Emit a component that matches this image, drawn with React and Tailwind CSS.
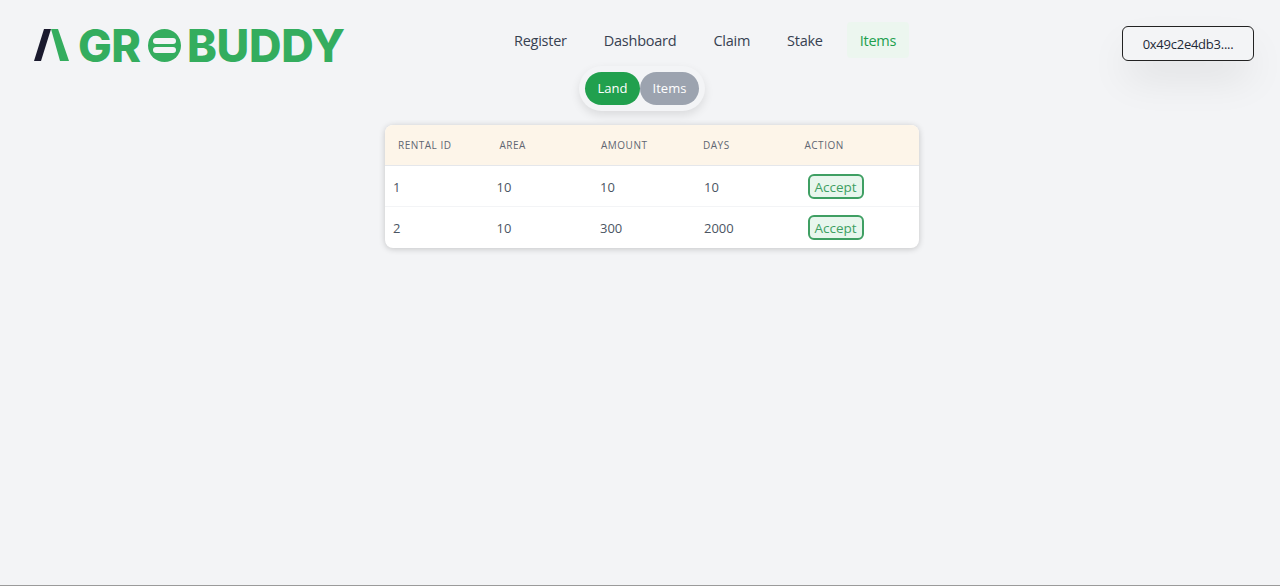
const NAV_LINKS = ['Register', 'Dashboard', 'Claim', 'Stake', 'Items'];
const COLUMNS = ['Rental ID', 'Area', 'Amount', 'Days', 'Action'];
const RENTALS = [
  { id: 1, area: 10, amount: 10, days: 10 },
  { id: 2, area: 10, amount: 300, days: 2000 },
];

function Logo() {
  return (
    <div className="flex items-center w-[311px] h-[34px] text-[#34ad5e] font-['Inter',sans-serif] font-extrabold text-[45px] leading-none">
      <svg width="44" height="34" viewBox="0 0 44 34" className="shrink-0">
        <polygon points="0,33 10,1 17,1 7,33" fill="#1a1a2e" />
        <polygon points="17,1 24,1 35,33 26,33" fill="#34ad5e" />
      </svg>
      <span className="tracking-[-0.6px] w-[70px]">GR</span>
      <svg width="33" height="33" viewBox="0 0 33 33" className="shrink-0">
        <circle cx="16.5" cy="16.5" r="16.5" fill="#34ad5e" />
        <rect x="5" y="9" width="23" height="6" rx="3" fill="#f3f4f6" />
        <rect x="5" y="18" width="23" height="6" rx="3" fill="#f3f4f6" />
      </svg>
      <span className="ml-[6px] tracking-[-0.3px]">BUDDY</span>
    </div>
  );
}

export default function App() {
  return (
    <div className="h-[586px] bg-[#f3f4f6] border-b border-[#9a9a9a] font-['Open_Sans',sans-serif] text-[#374151] overflow-hidden">
      <header className="flex items-start h-[66px] pl-[34px] pr-[26px] pt-[22px]">
        <div className="pt-[6px]">
          <Logo />
        </div>

        <nav className="ml-[156px] flex gap-[11px] text-[14.5px] tracking-[-0.25px]">
          {NAV_LINKS.map((link, i) => (
            <a
              key={link}
              className={`h-[36px] px-[13px] pt-[1px] flex items-center rounded ${i === 4 ? 'bg-[#ecf6ef] text-[#21a04e]' : 'text-[#374151]'}`}
            >
              {link}
            </a>
          ))}
        </nav>

        <button className="ml-auto mt-[4px] pt-[2px] w-[132px] h-[35px] rounded-md border border-[#222] text-[13px] tracking-[-0.25px] text-[#1f2937] bg-[#f3f4f6] shadow-[0_20px_40px_-5px_rgba(0,0,0,0.1)]">
          0x49c2e4db3....
        </button>
      </header>

      {/* Land / Items toggle */}
      <div className="flex justify-center pl-[4px]">
        <div className="flex p-[6px] rounded-full bg-[#f3f4f6] shadow-[0_4px_10px_rgba(0,0,0,0.1)]">
          <button className="w-[55px] h-[33px] rounded-full bg-[#21a04e] text-white text-[13px]">Land</button>
          <button className="w-[59px] h-[33px] rounded-full bg-[#9ca3af] text-white text-[13px]">Items</button>
        </div>
      </div>

      <div className="pl-[385px] mt-[14px]">
        <table className="w-[534px] table-fixed bg-white rounded-lg shadow-[0_1px_6px_rgba(0,0,0,0.2)] overflow-hidden border-collapse">
          <thead>
            <tr className="h-[40px] bg-[#fdf5e9] border-b border-[#e5e7eb]">
              {COLUMNS.map((col, i) => (
                <th
                  key={col}
                  className={`pl-[13px] pt-[2px] text-left text-[10px] font-medium tracking-[0.5px] uppercase text-[#5f6672] ${i === 4 ? 'w-[127.5px]' : i === 2 ? 'w-[102px]' : 'w-[101.5px]'}`}
                >
                  {col}
                </th>
              ))}
            </tr>
          </thead>
          <tbody className="text-[13px] text-[#4b5563]">
            {RENTALS.map((r, i) => (
              <tr key={r.id} className="h-[41.5px] border-b border-[#f3f4f6] last:border-0">
                <td className="pl-[8px] pt-[3px]">{r.id}</td>
                <td className="pl-[10px] pt-[3px]">{r.area}</td>
                <td className="pl-[12px] pt-[3px]">{r.amount}</td>
                <td className="pl-[14px] pt-[3px]">{r.days}</td>
                <td className={`pl-[16px] ${i === 0 ? 'pt-[1px]' : ''}`}>
                  <button className="w-[56px] h-[25px] pt-[2px] rounded-md border-2 border-[#3f9f63] bg-[#e8f6ed] text-[#3f9f63] text-[13.5px] leading-none">
                    Accept
                  </button>
                </td>
              </tr>
            ))}
          </tbody>
        </table>
      </div>
    </div>
  );
}
